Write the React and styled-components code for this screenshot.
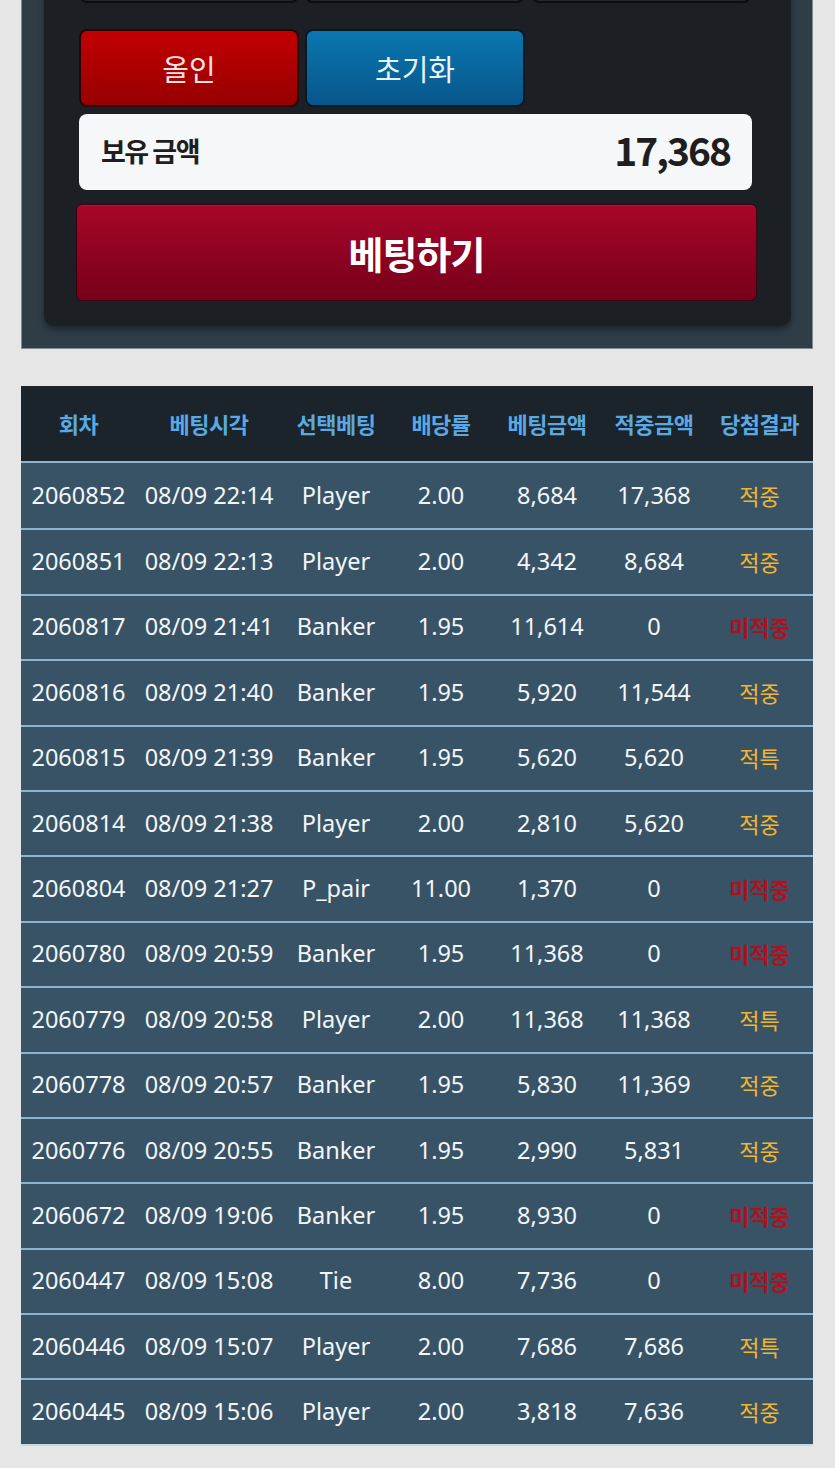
import styled, { createGlobalStyle } from "styled-components";

const GlobalStyle = createGlobalStyle`
*{
    margin: 0;
    padding: 0;
    box-sizing: border-box;
}
body{
    background: #e6e6e6;
    font-family: "Noto Sans", "Noto Sans CJK KR", sans-serif;
    overflow: hidden;
}
`

const rows = [
    ["2060852", "08/09 22:14", "Player", "2.00", "8,684", "17,368", "적중"],
    ["2060851", "08/09 22:13", "Player", "2.00", "4,342", "8,684", "적중"],
    ["2060817", "08/09 21:41", "Banker", "1.95", "11,614", "0", "미적중"],
    ["2060816", "08/09 21:40", "Banker", "1.95", "5,920", "11,544", "적중"],
    ["2060815", "08/09 21:39", "Banker", "1.95", "5,620", "5,620", "적특"],
    ["2060814", "08/09 21:38", "Player", "2.00", "2,810", "5,620", "적중"],
    ["2060804", "08/09 21:27", "P_pair", "11.00", "1,370", "0", "미적중"],
    ["2060780", "08/09 20:59", "Banker", "1.95", "11,368", "0", "미적중"],
    ["2060779", "08/09 20:58", "Player", "2.00", "11,368", "11,368", "적특"],
    ["2060778", "08/09 20:57", "Banker", "1.95", "5,830", "11,369", "적중"],
    ["2060776", "08/09 20:55", "Banker", "1.95", "2,990", "5,831", "적중"],
    ["2060672", "08/09 19:06", "Banker", "1.95", "8,930", "0", "미적중"],
    ["2060447", "08/09 15:08", "Tie", "8.00", "7,736", "0", "미적중"],
    ["2060446", "08/09 15:07", "Player", "2.00", "7,686", "7,686", "적특"],
    ["2060445", "08/09 15:06", "Player", "2.00", "3,818", "7,636", "적중"],
]

const heads = ["회차", "베팅시각", "선택베팅", "배당률", "베팅금액", "적중금액", "당첨결과"]

export default function App() {
    return (
        <Page>
            <GlobalStyle />
            <Panel>
                <Card>
                    <ButtonRow>
                        <Chip />
                        <Chip />
                        <Chip />
                    </ButtonRow>
                    <ButtonRow>
                        <ActionButton color="red">올인</ActionButton>
                        <ActionButton color="blue">초기화</ActionButton>
                        <Spacer />
                    </ButtonRow>
                    <Balance>
                        <span className="label">보유 금액</span>
                        <span className="amount">17,368</span>
                    </Balance>
                    <BetButton>베팅하기</BetButton>
                </Card>
            </Panel>

            <Table>
                <HeadRow>
                    {heads.map((h) => (
                        <Cell key={h}>{h}</Cell>
                    ))}
                </HeadRow>
                {rows.map((r) => (
                    <Row key={r[0]}>
                        {r.slice(0, 6).map((v, i) => (
                            <Cell key={i}>{v}</Cell>
                        ))}
                        <Result miss={r[6] === "미적중"}>{r[6]}</Result>
                    </Row>
                ))}
            </Table>
        </Page>
    )
}

const Page = styled.div`
    width: 835px;
    padding: 0 22px 0 21px;
`

const Panel = styled.div`
    margin-top: -60px;
    background: #2f3d47;
    border: 1px solid #7d8b95;
    border-top: none;
    padding: 0 21px 22px 22px;
`

const Card = styled.div`
    background: #1c2024;
    border-radius: 0 0 10px 10px;
    padding: 0 39px 25px 35px;
    box-shadow: 0 4px 6px rgba(0, 0, 0, 0.35);
    display: flex;
    flex-direction: column;
`

const ButtonRow = styled.div`
    display: grid;
    grid-template-columns: 220px 220px 220px;
    gap: 6px;
    & + & {
        margin-top: 26px;
    }
`

const Chip = styled.div`
    height: 63px;
    border: 2px solid #0b0d0f;
    border-radius: 8px;
    background: #22272b;
`

const Spacer = styled.div``

const ActionButton = styled.div`
    height: 78px;
    border: 2px solid #140606;
    border-radius: 8px;
    display: flex;
    align-items: center;
    justify-content: center;
    font-size: 29px;
    font-family: "Noto Sans CJK KR", sans-serif;
    color: ${(p) => (p.color === "red" ? "#fbe4e4" : "#e9f5fb")};
    background: ${(p) =>
        p.color === "red"
            ? "linear-gradient(#c20000, #970000)"
            : "linear-gradient(#0a77b1, #075689)"};
    border-color: ${(p) => (p.color === "red" ? "#2a0505" : "#061a26")};
`

const Balance = styled.div`
    margin-top: 7px;
    height: 76px;
    background: #f6f7f8;
    border-radius: 8px;
    display: flex;
    align-items: center;
    justify-content: space-between;
    padding: 0 22px 0 22px;
    color: #1e1e1e;
    font-family: "Noto Sans CJK KR", sans-serif;
    font-weight: 700;
    .label{
        font-size: 27px;
        letter-spacing: -1.5px;
        margin-top: -4px;
    }
    .amount{
        font-size: 39px;
        letter-spacing: -2px;
        margin-top: -6px;
    }
`

const BetButton = styled.div`
    margin: 14px -5px 0 -3px;
    height: 97px;
    border-radius: 6px;
    border: 1px solid #3a0010;
    background: linear-gradient(#a8062a, #76001a);
    box-shadow: inset 0 1px 0 rgba(255, 255, 255, 0.08);
    display: flex;
    align-items: center;
    justify-content: center;
    color: #ffffff;
    font-family: "Noto Sans CJK KR", sans-serif;
    font-weight: 700;
    font-size: 38px;
    letter-spacing: -1px;
`

const Table = styled.div`
    margin-top: 37px;
    background: #385366;
    border-bottom: 2px solid #c6d8e4;
`

const cols = "115px 146px 108px 102px 110px 104px 107px"

const HeadRow = styled.div`
    display: grid;
    grid-template-columns: ${cols};
    height: 77px;
    align-items: center;
    background: #1b232b;
    color: #5aa9e2;
    font-family: "Noto Sans CJK KR", sans-serif;
    font-weight: 700;
    font-size: 22px;
    letter-spacing: -0.5px;
    border-bottom: 2px solid #8db5cf;
`

const Row = styled.div`
    display: grid;
    grid-template-columns: ${cols};
    height: 65.4px;
    align-items: center;
    color: #f3f6f8;
    font-size: 23.5px;
    & + & {
        border-top: 2px solid #8db5cf;
    }
`

const Cell = styled.div`
    text-align: center;
    white-space: nowrap;
    padding-bottom: 2px;
`

const Result = styled(Cell)`
    font-family: "Noto Sans CJK KR", sans-serif;
    font-size: 22px;
    color: ${(p) => (p.miss ? "#b3101f" : "#f1b52f")};
    font-weight: ${(p) => (p.miss ? 700 : 400)};
`
